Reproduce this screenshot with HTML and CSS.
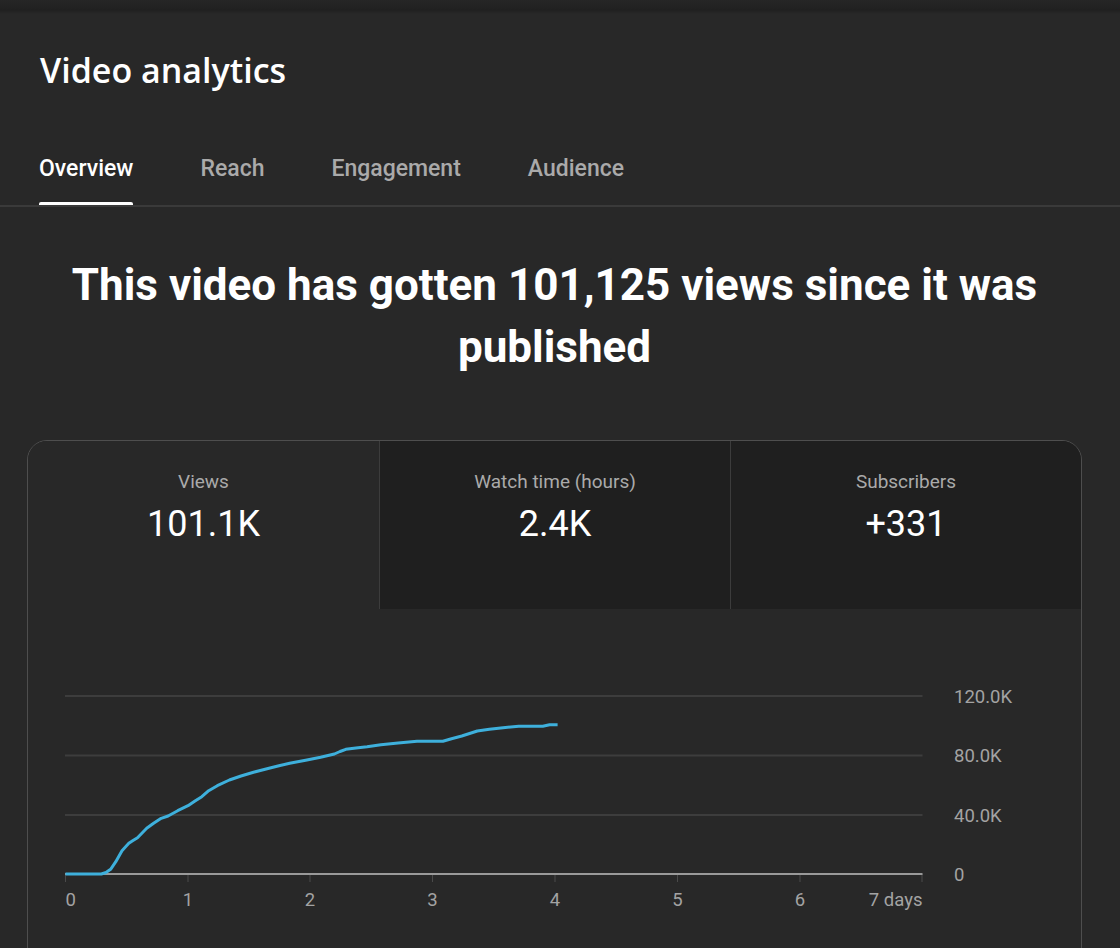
FILE: index.html
```html
<!DOCTYPE html>
<html>
<head>
<meta charset="utf-8">
<link rel="stylesheet" href="styles.css">
</head>
<body>
<div class="topbar"></div>
<main class="page">
  <h1 class="title">Video analytics</h1>
  <nav class="tabs">
    <span class="tab active">Overview</span>
    <span class="tab">Reach</span>
    <span class="tab">Engagement</span>
    <span class="tab">Audience</span>
  </nav>
  <div class="content">
    <h2 class="headline">This video has gotten 101,125 views since it was published</h2>
    <section class="card">
      <div class="stats">
        <div class="stat selected">
          <div class="stat-label">Views</div>
          <div class="stat-value">101.1K</div>
        </div>
        <div class="stat">
          <div class="stat-label">Watch time (hours)</div>
          <div class="stat-value">2.4K</div>
        </div>
        <div class="stat">
          <div class="stat-label">Subscribers</div>
          <div class="stat-value">+331</div>
        </div>
      </div>
      <div class="chart">
        <svg class="chart-svg" width="1053" height="360" viewBox="28 609 1053 360">
          <g class="grid">
            <line x1="65" y1="696" x2="922.5" y2="696"/>
            <line x1="65" y1="755.5" x2="922.5" y2="755.5"/>
            <line x1="65" y1="815" x2="922.5" y2="815"/>
          </g>
          <g class="ticks">
            <line x1="65.5" y1="874" x2="65.5" y2="882"/>
            <line x1="188" y1="874" x2="188" y2="882"/>
            <line x1="310" y1="874" x2="310" y2="882"/>
            <line x1="432.5" y1="874" x2="432.5" y2="882"/>
            <line x1="555" y1="874" x2="555" y2="882"/>
            <line x1="677.5" y1="874" x2="677.5" y2="882"/>
            <line x1="800" y1="874" x2="800" y2="882"/>
            <line x1="922" y1="874" x2="922" y2="882"/>
          </g>
          <line class="axis" x1="65" y1="874" x2="922.5" y2="874"/>
          <polyline class="series" points="65.5,874 101.3,874 106,872.5 110.6,869.3 115.8,861.7 122,850.7 128.8,843.3 133,840.5 137.5,837.7 146.7,828.3 153.6,823.3 161.2,818.3 168.1,816 177.7,810.7 188,805.7 195,801 201.8,796.7 208.7,790.7 217.3,785.7 229.4,780 241,776 253.5,772.3 269,768.3 280,765.5 289.7,763.3 306.9,760 320.6,757.3 334.4,754 340,751.5 345.8,749.3 356,748 367.1,746.7 380.9,744.7 398.1,743 417,741.3 442.9,741.3 451.5,738.7 461.8,736 477.3,731 489.4,729.3 503.1,727.7 518.7,726.3 542.8,726.3 549.6,724.7 557.6,724.7"/>
          <g class="ylabels">
            <text x="954" y="703">120.0K</text>
            <text x="954" y="762">80.0K</text>
            <text x="954" y="821.5">40.0K</text>
            <text x="954" y="880.5">0</text>
          </g>
          <g class="xlabels">
            <text x="65.5" y="906" text-anchor="start">0</text>
            <text x="188" y="906" text-anchor="middle">1</text>
            <text x="310" y="906" text-anchor="middle">2</text>
            <text x="432.5" y="906" text-anchor="middle">3</text>
            <text x="555" y="906" text-anchor="middle">4</text>
            <text x="677.5" y="906" text-anchor="middle">5</text>
            <text x="800" y="906" text-anchor="middle">6</text>
            <text x="922.5" y="906" text-anchor="end">7 days</text>
          </g>
        </svg>
      </div>
    </section>
  </div>
</main>
</body>
</html>
```

FILE: styles.css
```css
* { box-sizing: border-box; }
html, body {
  margin: 0;
  padding: 0;
  background: #282828;
  color: #fff;
  overflow: hidden;
  height: 948px;
}
.topbar {
  height: 14px;
  background: linear-gradient(to bottom, #262626 0px, #232323 6px, #202020 10px, #282828 14px);
}
.page {
  display: flex;
  flex-direction: column;
}
.title {
  margin: 36px 0 0 40px;
  font-family: "Open Sans", "Noto Sans", sans-serif;
  font-weight: 600;
  font-size: 34px;
  line-height: 40px;
  color: #fff;
  letter-spacing: 0;
}
.tabs {
  display: flex;
  gap: 67px;
  padding-left: 39px;
  margin-top: 65px;
  border-bottom: 2px solid #3a3a3a;
  font-family: Roboto, "Liberation Sans", sans-serif;
  font-weight: 500;
  font-size: 23px;
  line-height: 28px;
}
.tab {
  position: relative;
  color: #aaaaaa;
  padding-bottom: 22px;
}
.tab.active {
  color: #fff;
}
.tab.active::after {
  content: "";
  position: absolute;
  left: 0;
  right: 0;
  bottom: 0;
  height: 3px;
  background: #fff;
  border-radius: 2px 2px 0 0;
}
.content {
  padding: 0 38px 0 27px;
  display: flex;
  flex-direction: column;
}
.headline {
  margin: 47px 0 0 0;
  text-align: center;
  font-family: Roboto, "Liberation Sans", sans-serif;
  font-weight: 700;
  font-size: 44px;
  line-height: 62px;
  color: #fff;
  padding: 0 20px;
}
.card {
  margin-top: 62px;
  border: 1px solid #4e4e4e;
  border-radius: 20px 20px 0 0;
  overflow: hidden;
  height: 600px;
  background: #282828;
}
.stats {
  display: grid;
  grid-template-columns: 351px 351px 351px;
  height: 168px;
}
.stat {
  background: #1f1f1f;
  border-left: 1px solid #3c3c3c;
  text-align: center;
  padding-top: 30px;
  font-family: Roboto, "Liberation Sans", sans-serif;
}
.stat.selected {
  background: #282828;
  border-left: none;
}
.stat-label {
  font-size: 19px;
  line-height: 22px;
  color: #aaaaaa;
}
.stat-value {
  margin-top: 9px;
  font-size: 36px;
  line-height: 44px;
  color: #fff;
}
.chart {
  display: block;
}
.chart-svg {
  display: block;
}
.grid line {
  stroke: #3d3d3d;
  stroke-width: 2;
}
.ticks line {
  stroke: #4a4a4a;
  stroke-width: 1;
}
.axis {
  stroke: #9a9a9a;
  stroke-width: 2;
}
.series {
  fill: none;
  stroke: #3eb0dc;
  stroke-width: 3;
  stroke-linejoin: round;
  stroke-linecap: butt;
}
.ylabels text, .xlabels text {
  font-family: Roboto, "Liberation Sans", sans-serif;
  font-size: 18.5px;
  fill: #a3a3a3;
}
```
